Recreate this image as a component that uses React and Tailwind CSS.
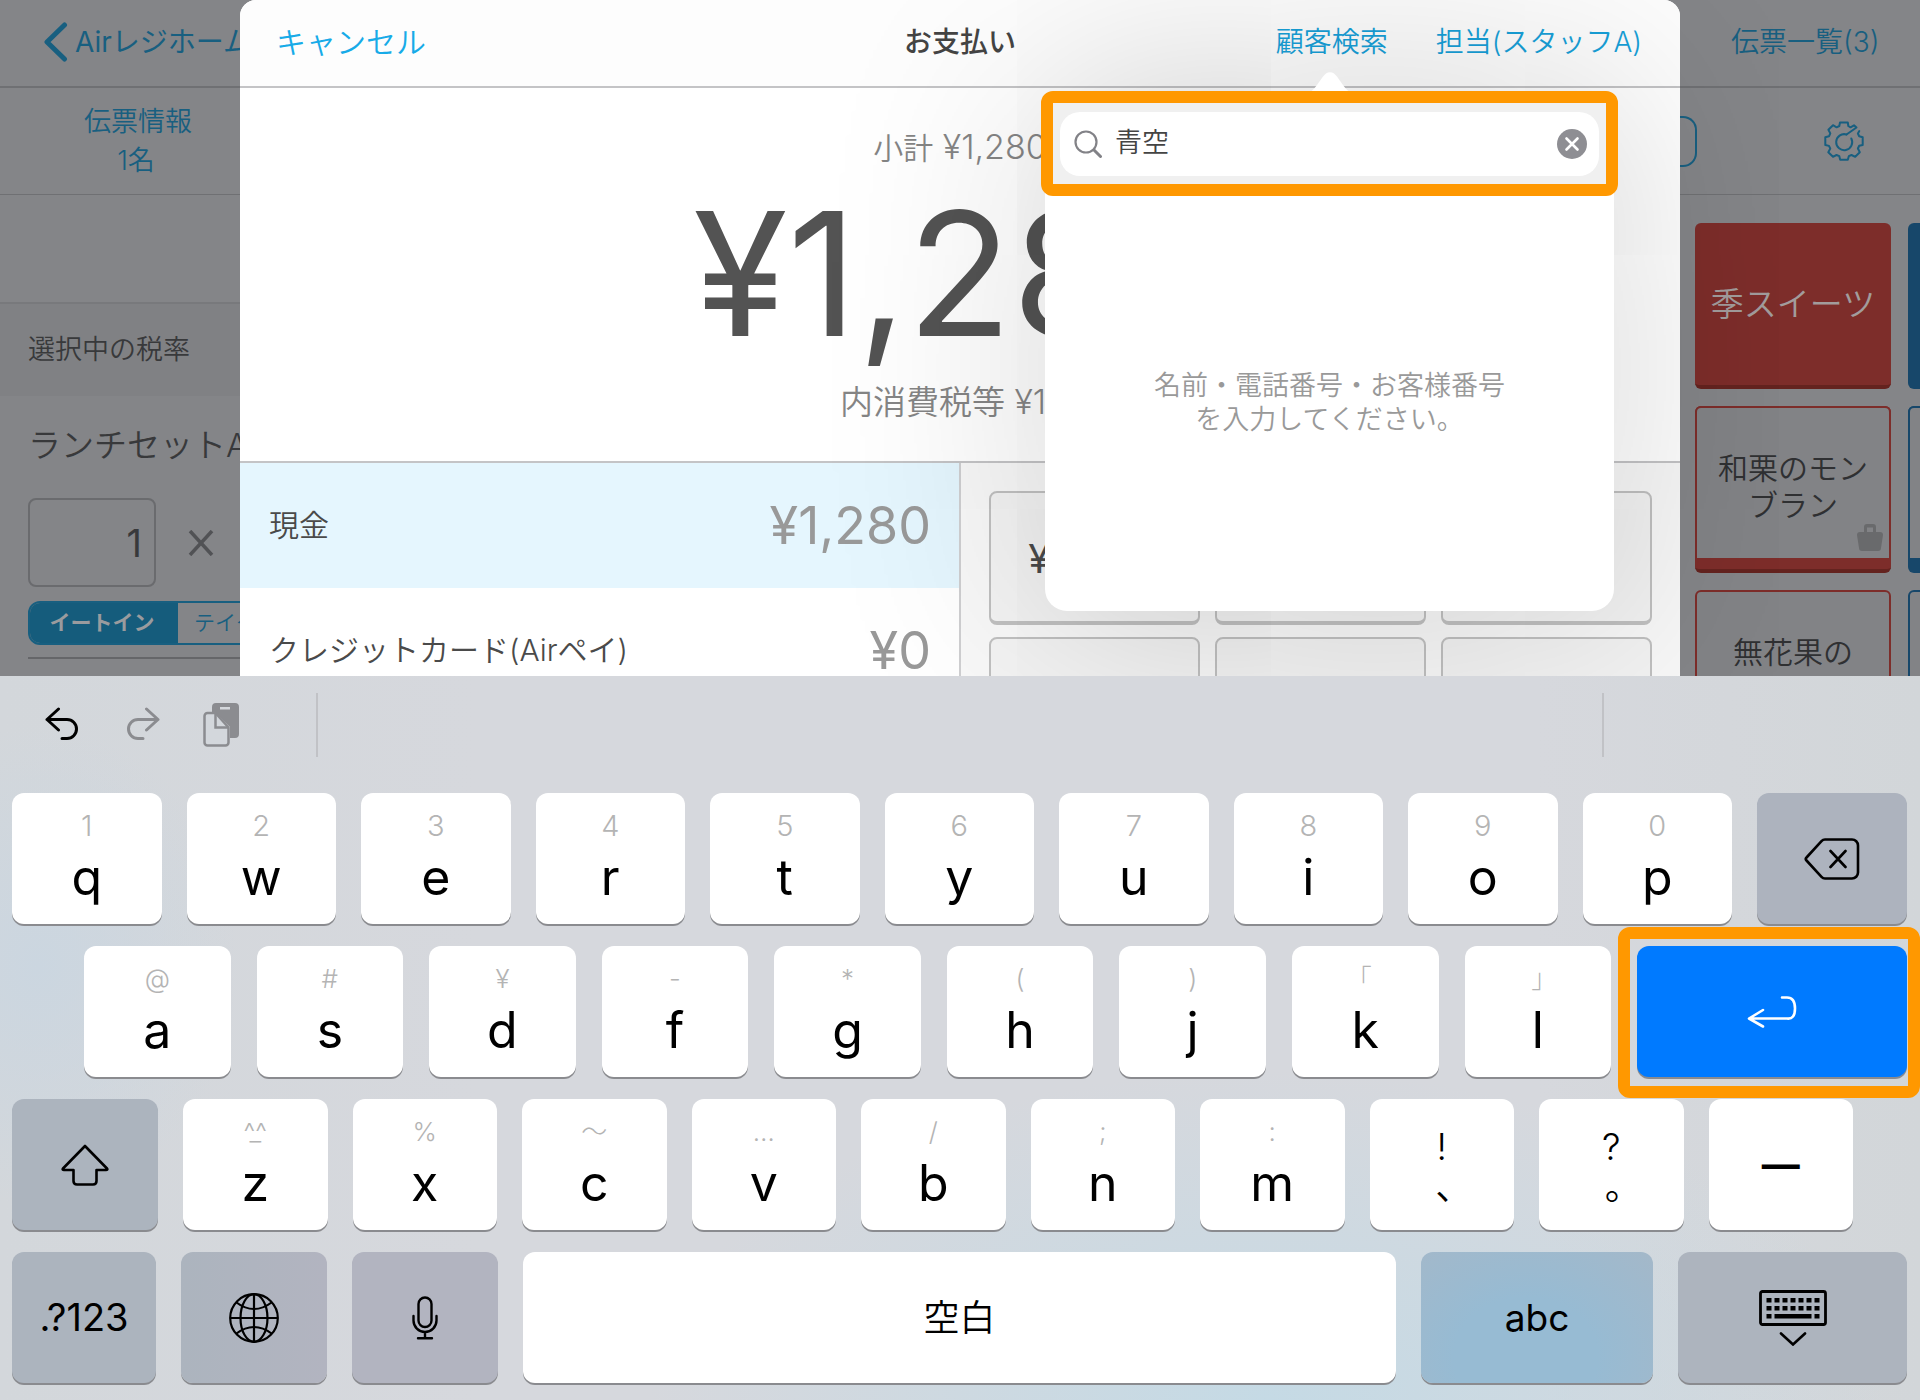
import React, { useState } from "react";

const NUMBER_ROW = [
  ["1", "q"], ["2", "w"], ["3", "e"], ["4", "r"], ["5", "t"],
  ["6", "y"], ["7", "u"], ["8", "i"], ["9", "o"], ["0", "p"],
];

const HOME_ROW = [
  ["@", "a"], ["#", "s"], ["¥", "d"], ["-", "f"], ["*", "g"],
  ["(", "h"], [")", "j"], ["｢", "k"], ["｣", "l"],
];

const BOTTOM_ROW = [
  ["^^", "z"], ["%", "x"], ["〜", "c"], ["…", "v"],
  ["/", "b"], [";", "n"], [":", "m"],
];

const METHODS = [
  { name: "現金", amount: "¥1,280", active: true },
  { name: "クレジットカード(Airペイ)", amount: "¥0", active: false },
];

const QUICK_AMOUNTS = ["¥2,000", "", "", "", "", ""];

function Key({ label, className = "", children, ...rest }) {
  return (
    <button
      type="button"
      aria-label={label}
      className={`relative flex h-[131px] min-w-0 flex-col items-center rounded-xl shadow-[0_2px_0_#8a8b8f] ${className}`}
      {...rest}
    >
      {children}
    </button>
  );
}

function LetterKey({ sub, main }) {
  const isDigit = /\d/.test(sub);
  return (
    <Key className="flex-1 bg-white pt-[15px]">
      <span className={`relative h-9 leading-9 font-light text-[#b4b4b4] ${isDigit ? "text-[29px]" : "text-[26px]"}`}>
        {sub}
        {sub === "^^" && <span className="absolute inset-x-0 top-0 text-center">_</span>}
      </span>
      <span className="text-[50px] leading-[66px] text-black">{main}</span>
    </Key>
  );
}

function UndoIcon({ className }) {
  return (
    <svg viewBox="0 0 36 36" fill="none" stroke="currentColor" strokeWidth="3" strokeLinecap="round" strokeLinejoin="round" className={className}>
      <path d="M13.500 2 2 12.500 13.500 23M2 12.500h20a9.500 9.500 0 0 1 0 19h-5" />
    </svg>
  );
}

function PasteIcon() {
  return (
    <svg viewBox="0 0 36 44" className="h-11 w-9 text-[#8b8c90]" fill="none">
      <path fill="currentColor" fillRule="evenodd" d="M13 0h19a4 4 0 0 1 4 4v27a4 4 0 0 1-4 4h-5V24L13 10V9H9V4a4 4 0 0 1 4-4Zm4 4v2.500h10V4Z" />
      <path d="M12.500 10H4.500a3 3 0 0 0-3 3v26.500a3 3 0 0 0 3 3h18a3 3 0 0 0 3-3V24.500Z" fill="#d3d7dc" stroke="currentColor" strokeWidth="2.500" strokeLinejoin="round" />
      <path d="M12.500 10v14.500h13" stroke="currentColor" strokeWidth="2.500" />
    </svg>
  );
}

function GearIcon() {
  return (
    <svg viewBox="0 0 40 40" className="size-10 text-[#185f80]" fill="none" stroke="currentColor" strokeWidth="2" strokeLinejoin="round" strokeLinecap="round">
      <path d="M22.500 13.500 32.500 6.500 30 4.300 26.500 6.300 24.300 5 23.800 1.500H16L15.300 5 12.600 6.300 9 4.200 4.400 8.800 6.300 12.400 5 15.300 1.300 16.200V24L5 24.900 6.300 27.600 4.300 31.200 9 35.800 12.500 34 15.300 35.200 16.200 38.700H23.800L24.800 35.200 27.500 34 31.200 35.800 35.800 31.200 33.900 27.500 35.200 24.800 38.700 24V16.200L35.200 15.200 33.900 12.500 35.300 10" />
      <path d="M27.300 17.500a8 8 0 1 1-4.800-4" />
    </svg>
  );
}

function BagIcon() {
  return (
    <svg viewBox="0 0 26 27" className="absolute right-[6px] bottom-[7px] h-[27px] w-[26px] text-[#696a6c]" fill="currentColor">
      <path fillRule="evenodd" d="M7 8V3a3 3 0 0 1 3-3h6a3 3 0 0 1 3 3v5h4a3 3 0 0 1 3 3l-2 13a3 3 0 0 1-3 3H5a3 3 0 0 1-3-3L0 11a3 3 0 0 1 3-3Zm3 0h6V3.500h-6Z" />
    </svg>
  );
}

function GlobeIcon() {
  return (
    <svg viewBox="0 0 50 50" className="size-[50px]" fill="none" stroke="currentColor" strokeWidth="2.200">
      <circle cx="25" cy="25" r="23.800" />
      <path d="M25 1v48M1 25h48" />
      <ellipse cx="25" cy="25" rx="13.500" ry="23.800" />
      <path d="M7.500 9.500Q16 16 25 16t17.500-6.500M7.500 40.500Q16 34 25 34t17.500 6.500" />
    </svg>
  );
}

function MicIcon() {
  return (
    <svg viewBox="0 0 26 44" className="h-11 w-[26px]" fill="none" stroke="currentColor" strokeWidth="2.400" strokeLinecap="round">
      <rect x="6.500" y="1.500" width="13" height="29.500" rx="6.500" />
      <path d="M1.500 20v4.500a11.500 11.500 0 0 0 23 0V20M13 36v6M6 42.300h14" />
    </svg>
  );
}

function KeyboardIcon() {
  const dots = [0, 1, 2, 3, 4, 5, 6];
  return (
    <svg viewBox="0 0 68 56" className="h-14 w-[68px]" fill="none" stroke="currentColor">
      <rect x="1.500" y="1.500" width="65" height="33" rx="2" strokeWidth="2.800" />
      <g fill="currentColor" stroke="none">
        {dots.map((i) => (
          <g key={i}>
            <rect x={7.500 + i * 8} y="8" width="5" height="4.500" />
            <rect x={7.500 + i * 8} y="16" width="5" height="4.500" />
          </g>
        ))}
        <rect x="7.500" y="24" width="5" height="4.500" />
        <rect x="15.500" y="24" width="37" height="4.500" />
        <rect x="55.500" y="24" width="5" height="4.500" />
      </g>
      <path d="M22 43.500 34 54.500 46 43.500" strokeWidth="2.600" strokeLinecap="round" />
    </svg>
  );
}

function OrderPanel() {
  return (
    <aside className="flex w-60 shrink-0 flex-col overflow-hidden whitespace-nowrap text-[#38393b]">
      <div className="flex h-[88px] shrink-0 items-center border-b-2 border-[#6f7073] pb-0.5 pl-11">
        <a href="#home" className="flex items-center gap-[7px] text-[28px] leading-10 text-[#185f80]">
          <svg viewBox="0 0 24 40" className="h-10 w-6 shrink-0" fill="none" stroke="currentColor" strokeWidth="5" strokeLinecap="round" strokeLinejoin="round">
            <path d="M20.500 3 3 20l17.500 17" />
          </svg>
          Airレジホーム
        </a>
      </div>
      <button type="button" className="h-[107px] shrink-0 border-b border-[#6f7073] pl-9 text-center text-[27px] leading-[39px] font-[350] text-[#185f80]">
        <span className="block w-[204px]">伝票情報</span>
        <span className="block w-[200px]">1名</span>
      </button>
      <div className="h-[109px] shrink-0 border-b-2 border-[#78797c]" />
      <div className="h-[92px] shrink-0 bg-[#808184] pl-7 text-[27px] leading-[92px] font-[350]">選択中の税率</div>
      <div className="flex flex-col pl-7">
        <div className="pt-6 text-[33px] leading-[50px] font-[350]">ランチセットA</div>
        <div className="mt-7 flex items-center gap-8">
          <input
            aria-label="数量"
            defaultValue="1"
            className="h-[89px] w-32 shrink-0 rounded-lg border-2 border-[#6a6b6e] bg-transparent pr-3 text-right text-[38px]"
          />
          <svg viewBox="0 0 26 26" className="size-[26px] shrink-0 text-[#515255]" stroke="currentColor" strokeWidth="3.500">
            <path d="M2 1l22 24M24 1 2 25" />
          </svg>
        </div>
        <div className="mt-[14px] flex h-11 w-[300px] shrink-0 overflow-hidden rounded-xl border-2 border-[#185f80] text-[21px]">
          <button type="button" className="w-[148px] shrink-0 bg-[#155c7c] pr-1 font-bold text-[#9a9b9e]">イートイン</button>
          <button type="button" className="pl-4 font-[350] text-[#185f80]">テイクアウト</button>
        </div>
        <div className="mt-3 h-0.5 bg-[#656669]" />
      </div>
    </aside>
  );
}

function ProductPanel() {
  return (
    <aside className="flex w-60 shrink-0 flex-col overflow-hidden whitespace-nowrap">
      <div className="flex h-[88px] shrink-0 items-center border-b-2 border-[#6f7073] pb-0.5 pl-[51px]">
        <a href="#slips" className="text-[28px] leading-10 font-[350] text-[#185f80]">伝票一覧(3)</a>
      </div>
      <div className="flex h-[107px] shrink-0 items-center justify-between border-b border-[#6f7073] pr-14">
        <div className="h-[51px] w-[17px] rounded-r-[14px] border-2 border-l-0 border-[#185f80]" />
        <button type="button" aria-label="設定">
          <GearIcon />
        </button>
      </div>
      <div className="grid grid-cols-[196px_196px] gap-x-[17px] gap-y-[17px] pt-7 pl-[15px] text-center text-[30px] leading-[37px] font-[350] text-[#2f3032]">
        <button type="button" className="h-[166px] rounded-md border-b-4 border-[#64231f] bg-[#7d2d2a] text-[33px] text-[#a29c9c]">季スイーツ</button>
        <div className="rounded-md bg-[#17476a]" />
        <button type="button" className="flex h-[167px] flex-col rounded-md border-b-4 border-[#64231f] bg-[#7d2d2a]">
          <span className="relative w-full flex-1 rounded-t-md border-2 border-b-0 border-[#7d2d2a] bg-[#828386] pt-[42px]">
            和栗のモン
            <br />
            ブラン
            <BagIcon />
          </span>
          <span className="h-[11px]" />
        </button>
        <div className="flex flex-col rounded-md bg-[#17476a] pb-[15px]">
          <span className="flex-1 rounded-t-md border-2 border-b-0 border-[#17476a] bg-[#828386]" />
        </div>
        <button type="button" className="flex h-[166px] flex-col rounded-md border-2 border-[#7d2d2a] bg-[#828386] pt-[42px]">
          <span className="w-full">無花果の</span>
        </button>
        <div className="rounded-md border-2 border-[#17476a] bg-[#828386]" />
      </div>
    </aside>
  );
}

function CustomerSearch() {
  const [query, setQuery] = useState("青空");
  return (
    <div className="absolute top-[91px] right-[66px] h-[520px] w-[569px] rounded-[22px] bg-white shadow-[0_0_220px_rgba(0,0,0,0.2)]">
      <svg viewBox="0 0 44 20" className="absolute -top-[19px] left-1/2 h-5 w-11 -translate-x-1/2" fill="#fff">
        <path d="M2 20C8 17 14 4 18 1.500q4-2.500 8 0C30 4 36 17 42 20Z" />
      </svg>
      <div className="relative -mx-1 flex h-[105px] items-center rounded-xl border-12 border-[#ff9800] bg-[#f0f0f0] px-[7px]">
        <label className="flex h-16 w-full items-center gap-[13px] rounded-[20px] bg-white pr-3 pl-[14px]">
          <svg viewBox="0 0 28 28" className="size-7 shrink-0 text-[#828287]" fill="none" stroke="currentColor" strokeLinecap="round">
            <circle cx="12" cy="12" r="10.500" strokeWidth="2.200" />
            <path d="m20 20 6.500 6.500" strokeWidth="3" />
          </svg>
          <input
            aria-label="顧客検索"
            value={query}
            onChange={(e) => setQuery(e.target.value)}
            className="min-w-0 flex-1 bg-transparent text-[27px] font-[350] text-[#444] outline-none"
          />
          <button type="button" aria-label="クリア" onClick={() => setQuery("")}>
            <svg viewBox="0 0 30 30" className="size-[30px]">
              <circle cx="15" cy="15" r="15" fill="#8e8e93" />
              <path d="m9.500 9.500 11 11m0-11-11 11" stroke="#fff" strokeWidth="2.600" strokeLinecap="round" />
            </svg>
          </button>
        </label>
      </div>
      <p className="pt-[173px] text-center text-[27px] leading-[34px] font-[350] text-[#999]">
        名前・電話番号・お客様番号
        <br />
        を入力してください。
      </p>
    </div>
  );
}

function PaymentModal() {
  return (
    <main className="relative z-10 flex min-w-0 flex-1 flex-col rounded-t-2xl bg-white">
      <header className="grid h-[88px] shrink-0 grid-cols-[1fr_auto_1fr] items-center rounded-t-2xl border-b-2 border-[#c4c4c6] bg-[#fdfdfd] px-9 pb-0.5 text-[28px] leading-10">
        <button type="button" className="justify-self-start text-[30px] font-[350] text-[#17abe8]">キャンセル</button>
        <h1 className="font-medium text-[#444]">お支払い</h1>
        <div className="flex gap-12 justify-self-end pr-0.5 font-[350] text-[#17a0d8]">
          <button type="button">顧客検索</button>
          <button type="button">担当(スタッフA)</button>
        </div>
      </header>
      <section className="flex h-[375px] shrink-0 flex-col items-center border-b-2 border-[#c4c4c6] pt-9 whitespace-nowrap">
        <p className="text-[34px] leading-[46px] font-[350] text-[#858585]">
          <span className="text-[30px]">小計</span> ¥1,280
        </p>
        <p className="mt-[10px] text-[172px] leading-[184px] text-[#535353]">¥1,280</p>
        <p className="mt-[14px] text-[34px] leading-[46px] font-[350] text-[#858585]">
          <span className="text-[33px]">内消費税等</span> ¥116
        </p>
      </section>
      <div className="flex min-h-0 flex-1">
        <ul className="flex-1">
          {METHODS.map((m) => (
            <li key={m.name} className={m.active ? "bg-[#e5f6fe]" : ""}>
              <button type="button" className="flex h-[125px] w-full items-center justify-between pr-7 pl-[29px]">
                <span className="text-[30px] font-[350] text-[#4a4a4a]">{m.name}</span>
                <span className="text-[52px] text-[#999]">{m.amount}</span>
              </button>
            </li>
          ))}
        </ul>
        <div className="flex-1 overflow-hidden border-l-2 border-[#cfcfd1] bg-[#f8f8f8]">
          <div className="grid grid-cols-3 gap-x-[15px] gap-y-3 px-7 pt-7">
            {QUICK_AMOUNTS.map((amount, i) => (
              <button
                key={i}
                type="button"
                aria-label={amount || "金額"}
                className="h-[134px] rounded-lg border-2 border-b-4 border-[#c0c0c0] bg-[#f3f3f3] pt-1 text-[40px] text-[#4a4a4a]"
              >
                {amount}
              </button>
            ))}
          </div>
        </div>
      </div>
      <CustomerSearch />
    </main>
  );
}

function Keyboard() {
  return (
    <section
      aria-label="キーボード"
      className="relative z-20 shrink-0 bg-[#d6d8dd] bg-[radial-gradient(ellipse_620px_330px_at_66%_100%,#c5dae5,transparent),radial-gradient(ellipse_200px_240px_at_2%_40%,#cbd6e0,transparent),linear-gradient(90deg,#d3d7db_0,#d6d8dd_25%,#d6d8dd_80%,#d2d6d9_100%)] pb-[17px]"
    >
      <div className="flex h-[117px] items-center pr-[316px] pb-5 pl-[45px]">
        <div className="flex flex-1 items-center gap-[43px] border-r-2 border-[#c1c2c6]">
          <button type="button" aria-label="元に戻す">
            <UndoIcon className="size-9 text-black" />
          </button>
          <button type="button" aria-label="やり直す">
            <UndoIcon className="size-9 -scale-x-100 text-[#8b8c90]" />
          </button>
          <button type="button" aria-label="ペースト">
            <PasteIcon />
          </button>
          <div className="ml-[34px] h-16 w-0.5 bg-[#c1c2c6]" />
        </div>
      </div>
      <div className="flex flex-col gap-[22px] pl-3">
        <div className="flex gap-[25px] pr-[13px]">
          {NUMBER_ROW.map(([sub, main]) => (
            <LetterKey key={main} sub={sub} main={main} />
          ))}
          <Key label="削除" className="w-[150px] justify-center bg-[#adb3be]">
            <svg viewBox="0 0 56 42" className="h-[42px] w-14" fill="none" stroke="currentColor" strokeWidth="2.600" strokeLinejoin="round" strokeLinecap="round">
              <path d="M21 1.500h27a6 6 0 0 1 6 6v27a6 6 0 0 1-6 6H21q-2 0-3.500-1.600L2.500 22.500q-1.500-1.500 0-3L17.500 3.100Q19 1.500 21 1.500ZM26.500 13l15 16m0-16-15 16" />
            </svg>
          </Key>
        </div>
        <div className="flex gap-[26px] pr-[13px] pl-[72px]">
          {HOME_ROW.map(([sub, main]) => (
            <LetterKey key={main} sub={sub} main={main} />
          ))}
          <Key label="確定" className="w-[270px] justify-center bg-[#007aff] text-white">
            <svg viewBox="0 0 50 32" className="h-8 w-[50px]" fill="none" stroke="currentColor" strokeWidth="2.600" strokeLinejoin="round" strokeLinecap="round">
              <path d="M35 1.500h5q8 0 8 11t-8 10H2.500M16 14 2 22.500 16 30.500" />
            </svg>
            <span className="absolute -top-[19px] -right-[13px] -bottom-[21px] -left-[19px] rounded-xl border-12 border-[#ff9800]" />
          </Key>
        </div>
        <div className="flex gap-[25px] pr-[67px]">
          <Key label="シフト" className="w-[146px] justify-center bg-[#acb4be]">
            <svg viewBox="0 0 48 42" className="h-[42px] w-12" fill="none" stroke="currentColor" strokeWidth="2.600" strokeLinejoin="round">
              <path d="M24 2 46 24.500q1 1.500-1 1.500H35.500V37q0 3.500-3.500 3.500H16q-3.500 0-3.500-3.500V26H3q-2 0-1-1.500Z" />
            </svg>
          </Key>
          {BOTTOM_ROW.map(([sub, main]) => (
            <LetterKey key={main} sub={sub} main={main} />
          ))}
          <Key className="flex-1 bg-white pt-7 text-[37px] leading-10 font-[350]">
            <span>!</span>
            <span className="pl-6">、</span>
          </Key>
          <Key className="flex-1 bg-white pt-7 text-[37px] leading-10 font-[350]">
            <span>?</span>
            <span className="pl-6">。</span>
          </Key>
          <Key className="flex-1 justify-center bg-white text-[38px] font-bold">—</Key>
        </div>
        <div className="flex gap-[25px] pr-[13px] text-[38px]">
          <Key className="w-[144px] justify-center bg-[#acb4be]">.?123</Key>
          <Key label="言語" className="w-[146px] justify-center bg-linear-to-r from-[#acb4be] to-[#b2b4c0]">
            <GlobeIcon />
          </Key>
          <Key label="音声入力" className="w-[146px] justify-center bg-[#b2b4c0]">
            <MicIcon />
          </Key>
          <Key className="flex-1 justify-center bg-white text-[36px] font-[350]">空白</Key>
          <Key className="w-[232px] justify-center bg-[radial-gradient(ellipse_at_45%_80%,#97bbd3_40%,#a4b8c9)] text-[37px]">abc</Key>
          <Key label="キーボードを隠す" className="w-[229px] justify-center bg-[#adb4be]">
            <KeyboardIcon />
          </Key>
        </div>
      </div>
    </section>
  );
}

export default function App() {
  return (
    <div lang="ja" className="flex h-screen flex-col overflow-hidden font-['Inter','Noto_Sans_CJK_JP',sans-serif] text-black">
      <div className="flex min-h-0 flex-1 overflow-hidden bg-[#848588]">
        <OrderPanel />
        <PaymentModal />
        <ProductPanel />
      </div>
      <Keyboard />
    </div>
  );
}
